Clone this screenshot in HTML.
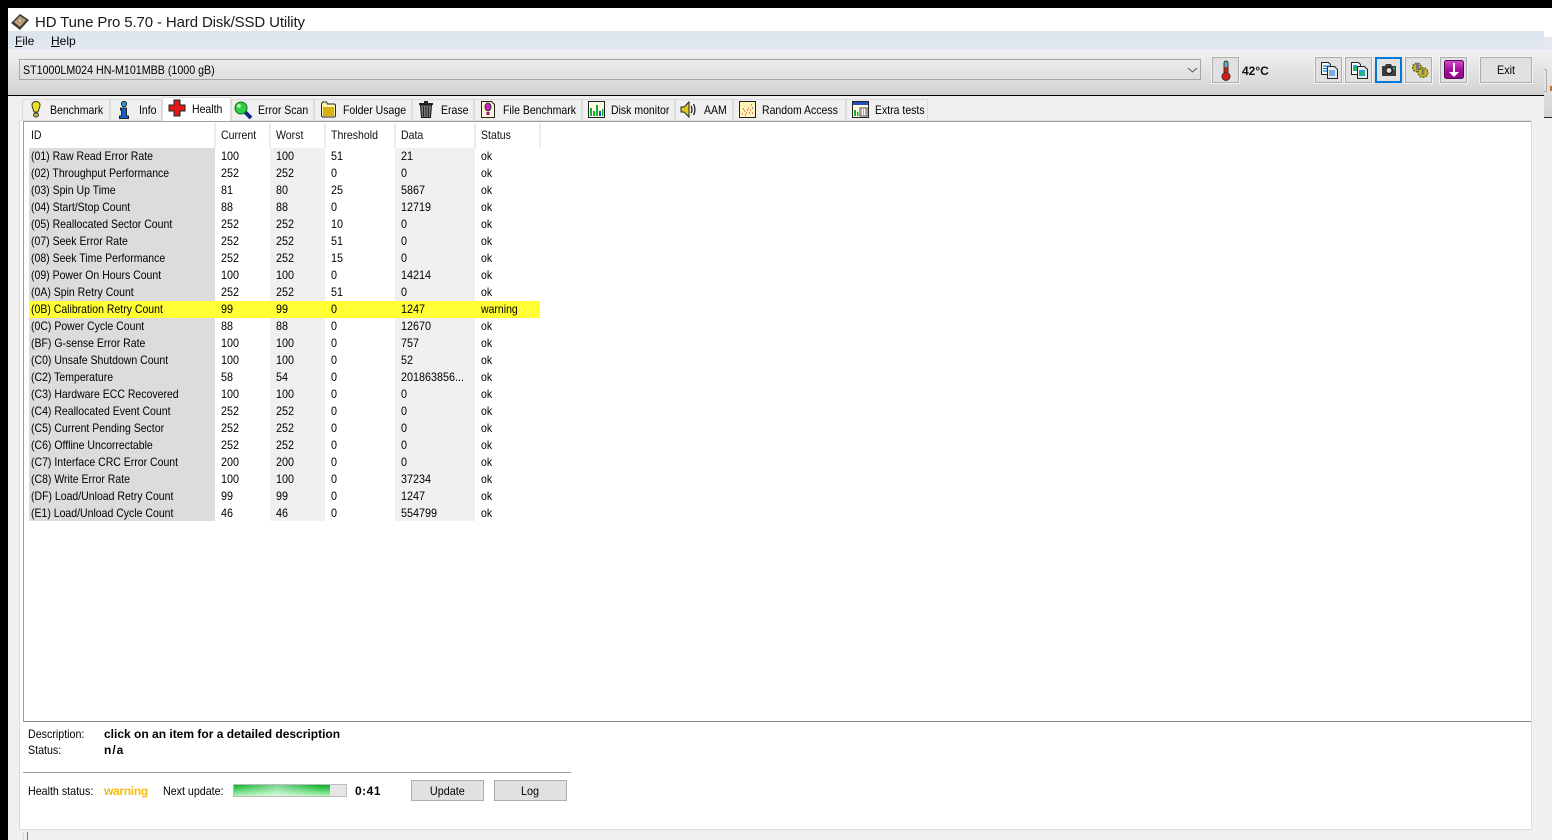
<!DOCTYPE html>
<html><head><meta charset="utf-8"><title>HD Tune Pro</title>
<style>
html,body{margin:0;padding:0;background:#fff}
body{width:1552px;height:840px;overflow:hidden;position:relative;font:12px/14px "Liberation Sans",sans-serif;color:#000}
.a,.r span,.t span,.h span{position:absolute;white-space:nowrap}
.a{display:block}
.s{transform:scaleX(.89);transform-origin:0 0}
.r{position:absolute;left:29px;width:511px;height:17px}
.r span{top:1px;transform:scaleX(.9);transform-origin:0 0}
.r .c1{transform:scaleX(.875)}
.r .c6{transform:scaleX(.875)}
.c1{left:2px}.c2{left:192px}.c3{left:247px}.c4{left:302px}.c5{left:372px}.c6{left:452px}
.y{background:#ffff33}
.t{position:absolute;top:99px;height:21px;box-sizing:border-box;background:#f0f0f0;border:1px solid #dcdcdc;border-bottom:0}
.t span{top:3px;transform:scaleX(.875);transform-origin:0 0}
.t svg,.btn svg{position:absolute}
.btn{position:absolute;box-sizing:border-box;background:#e1e1e1;border:1px solid #adadad;box-shadow:0 0 0 1px #f4f4f4;text-align:center}
.btn b{font-weight:normal;display:inline-block;transform:scaleX(.9)}
.h span{top:128px;color:#111;transform:scaleX(.88);transform-origin:0 0}
.sep{position:absolute;top:123px;width:2px;height:25px;background:#ececec}
</style></head><body>
<!-- window frame -->
<div class="a" style="left:0;top:0;width:1552px;height:8px;background:#000"></div>
<div class="a" style="left:0;top:0;width:8px;height:840px;background:#000"></div>
<div class="a" style="left:8px;top:8px;width:1536px;height:23px;background:#fff"></div>
<div class="a" style="left:8px;top:31px;width:1536px;height:19px;background:linear-gradient(#dbe3ed,#e4e9f1)"></div>
<div class="a" style="left:8px;top:50px;width:1536px;height:45px;background:linear-gradient(#f1f1f1,#d2d2d2)"></div>
<div class="a" style="left:8px;top:95px;width:1536px;height:1px;background:#000"></div>
<div class="a" style="left:8px;top:96px;width:1536px;height:744px;background:#f0f0f0"></div>
<!-- neighbouring window strip -->
<div class="a" style="left:1544px;top:37px;width:8px;height:13px;background:#e4e9f1"></div>
<div class="a" style="left:1544px;top:50px;width:8px;height:67px;background:linear-gradient(#f0f0f0,#d4d4d4)"></div>
<div class="a" style="left:1544px;top:69px;width:3px;height:23px;border:1px solid #b0b0b0;border-left:0;box-sizing:border-box"></div>
<div class="a" style="left:1550px;top:86px;width:2px;height:5px;background:#c07820"></div>
<div class="a" style="left:1544px;top:117px;width:8px;height:1px;background:#222"></div>
<div class="a" style="left:1544px;top:118px;width:8px;height:722px;background:#f0f0f0"></div>

<!-- title -->
<svg class="a" style="left:11px;top:13px" width="19" height="18" viewBox="0 0 19 18"><path d="M0 10 9 1l9 6-9 10z" fill="#3a3a3a"/><path d="M3 9 9 3l6 4-6 7z" fill="#c8a070"/><ellipse cx="9" cy="7.500" rx="3" ry="2.500" fill="#9a9a8a"/><circle cx="9" cy="7.500" r="1" fill="#f0e6d0"/></svg>
<div class="a" style="left:35px;top:14px;font-size:15px;line-height:17px;color:#1a1a1a;letter-spacing:-.13px;white-space:nowrap">HD Tune Pro 5.70 - Hard Disk/SSD Utility</div>
<div class="a" style="left:15px;top:34px"><u>F</u>ile</div>
<div class="a" style="left:51px;top:34px"><u>H</u>elp</div>

<!-- toolbar -->
<div class="a" style="left:19px;top:59px;width:1182px;height:21px;box-sizing:border-box;border:1px solid #a6a6a6;background:linear-gradient(#ebebeb,#dedede)"></div>
<div class="a s" style="left:23px;top:63px;white-space:nowrap">ST1000LM024 HN-M101MBB (1000 gB)</div>
<svg class="a" style="left:1187px;top:67px" width="11" height="6"><path d="M1 1l4.500 4L10 1" fill="none" stroke="#555"/></svg>

<div class="btn" style="left:1212px;top:57px;width:27px;height:26px"><svg style="left:6px;top:2px" width="14" height="22" viewBox="0 0 14 22"><rect x="5" y="1" width="4" height="13" rx="2" fill="#5fb8c8" stroke="#333"/><rect x="5.500" y="7" width="3" height="8" fill="#e01818"/><circle cx="7" cy="16.500" r="4" fill="#e01818" stroke="#333"/></svg></div>
<div class="a" style="left:1242px;top:64px;font-weight:bold;font-size:12px;color:#111">42°C</div>

<div class="btn" style="left:1315px;top:57px;width:27px;height:26px"><svg style="left:5px;top:4px" width="17" height="17" viewBox="0 0 17 17"><path d="M.5.500h7l2 2v10H.5z" fill="#fff" stroke="#222"/><path d="M6.500 4.500h7l3 3v9h-10z" fill="#e8e8e8" stroke="#222"/><path d="M2 4h6M2 6.500h4M2 9h4" stroke="#0a78e0" stroke-width="1.300"/><path d="M8 9h6M8 11h6M8 13h6" stroke="#0a78e0"/></svg></div>
<div class="btn" style="left:1345px;top:57px;width:27px;height:26px"><svg style="left:5px;top:4px" width="17" height="17" viewBox="0 0 17 17"><path d="M.5.500h7l2 2v10H.5z" fill="#fff" stroke="#222"/><path d="M6.500 4.500h7l3 3v9h-10z" fill="#e8e8e8" stroke="#222"/><rect x="2" y="3" width="4" height="6" fill="#1fa0e0"/><rect x="3" y="5" width="3" height="3" fill="#22c040"/><rect x="8" y="8" width="6" height="6" fill="#1fa0e0"/><rect x="9.500" y="10" width="3" height="3" fill="#22c040"/></svg></div>
<div class="btn" style="left:1375px;top:57px;width:27px;height:26px;border:2px solid #0078d7;box-shadow:none"><svg style="left:4px;top:4px" width="16" height="14" viewBox="0 0 16 14"><path d="M1 3h3l1-2h5l1 2h4v10H1z" fill="#3c3c3c"/><circle cx="8" cy="7.500" r="3" fill="#e0e0e0" stroke="#111"/><rect x="12" y="4.500" width="2" height="2" fill="#22d040"/></svg></div>
<div class="btn" style="left:1405px;top:57px;width:27px;height:26px"><svg style="left:5px;top:4px" width="18" height="16" viewBox="0 0 18 16"><circle cx="6" cy="5.500" r="4.300" fill="#c8b820" stroke="#6a6010" stroke-width="1.500" stroke-dasharray="2 1"/><circle cx="12" cy="10.500" r="4.800" fill="#d0c020" stroke="#6a6010" stroke-width="1.500" stroke-dasharray="2 1"/><rect x="5" y="1" width="3" height="7" fill="#777"/><rect x="10.500" y="7" width="3" height="6" fill="#777"/></svg></div>
<div class="btn" style="left:1440px;top:57px;width:27px;height:26px"><svg style="left:3px;top:2px" width="20" height="20" viewBox="0 0 20 20"><defs><linearGradient id="g" x1="0" y1="0" x2="0" y2="1"><stop offset="0" stop-color="#d050c8"/><stop offset=".5" stop-color="#a8109c"/><stop offset="1" stop-color="#8a0a80"/></linearGradient></defs><rect x=".5" y=".5" width="19" height="18" rx="2" fill="url(#g)" stroke="#5a0a55"/><path d="M9 3h2v9h4l-5 5-5-5h4z" fill="#fff"/></svg></div>
<div class="btn" style="left:1480px;top:57px;width:52px;height:26px;line-height:24px"><b>Exit</b></div>

<!-- main white panel -->
<div class="a" style="left:19px;top:120px;width:1513px;height:710px;box-sizing:border-box;background:#fff;border:1px solid #dcdcdc;border-left:1px solid #dcdcdc"></div>
<div class="a" style="left:23px;top:121px;width:1508px;height:601px;box-sizing:border-box;background:#fff;border:1px solid #a0a0a0;border-width:1px 0 1px 1px;border-bottom-color:#858590"></div>

<!-- tabs -->
<div class="t" style="left:22px;width:88px"><svg style="left:7px;top:1px" width="12" height="17" viewBox="0 0 12 17"><path d="M6 .5c2.500 0 4 1.500 4 3.500 0 2-1.500 5-2 7H4C3.500 9 2 6 2 4 2 2 3.500.5 6 .5z" fill="#e8e020" stroke="#333"/><ellipse cx="6" cy="14" rx="2.500" ry="2" fill="#c8c020" stroke="#333"/></svg><span style="left:27px">Benchmark</span></div>
<div class="t" style="left:110px;width:52px"><svg style="left:7px;top:1px" width="12" height="18" viewBox="0 0 12 18"><circle cx="6" cy="3" r="2.600" fill="#20a0f0" stroke="#222"/><path d="M2.500 7h6v8h2v2.500h-9V15h2v-6h-1z" fill="#1060d0" stroke="#222"/></svg><span style="left:28px">Info</span></div>
<div class="t" style="left:231px;width:83px"><svg style="left:2px;top:1px" width="19" height="19" viewBox="0 0 19 19"><path d="M10 10l7 7" stroke="#102a90" stroke-width="4"/><circle cx="7" cy="7" r="6" fill="#30d040" stroke="#107020"/><circle cx="5" cy="5" r="1.800" fill="#c8ffc8"/></svg><span style="left:26px">Error Scan</span></div>
<div class="t" style="left:314px;width:98px"><svg style="left:5px;top:1px" width="17" height="17" viewBox="0 0 17 17"><path d="M1.500 3l1-2h4l1 2h7l1 1v11l-1 1h-12l-1-1z" fill="#fff4b0" stroke="#222"/><path d="M3 6h11v9H3z" fill="#d8b010"/></svg><span style="left:28px">Folder Usage</span></div>
<div class="t" style="left:412px;width:62px"><svg style="left:5px;top:1px" width="16" height="17" viewBox="0 0 16 17"><path d="M1 3h14M6 1h4" stroke="#222" stroke-width="2"/><path d="M2.500 4h11l-1 12.500h-9z" fill="#777" stroke="#111"/><path d="M5.500 5.500v10M8 5.500v10M10.500 5.500v10" stroke="#222"/></svg><span style="left:28px">Erase</span></div>
<div class="t" style="left:474px;width:108px"><svg style="left:5px;top:0" width="16" height="19" viewBox="0 0 16 19"><path d="M1.500 1.500h10l3 3v13h-13z" fill="#fff5d8" stroke="#222"/><ellipse cx="8" cy="7" rx="3" ry="4" fill="#d020c0" stroke="#333"/><rect x="6.500" y="12" width="3" height="3" fill="#901080"/></svg><span style="left:28px">File Benchmark</span></div>
<div class="t" style="left:582px;width:93px"><svg style="left:5px;top:1px" width="17" height="17" viewBox="0 0 17 17"><rect x=".5" y=".5" width="16" height="16" fill="#fffbe0" stroke="#222"/><path d="M2 15V7h2v8zM5 15V10h2v5zM8 15V4h2v11z" fill="#10b030"/><path d="M11 15v-5h2v5z" fill="#1050d0"/><path d="M14 15V8h1.500v7z" fill="#10b030"/></svg><span style="left:28px">Disk monitor</span></div>
<div class="t" style="left:675px;width:58px"><svg style="left:4px;top:1px" width="18" height="17" viewBox="0 0 18 17"><path d="M1 6h3l5-5v15l-5-5H1z" fill="#e0c820" stroke="#222"/><path d="M11 5q2 3.500 0 7M13.500 3q3 5.500 0 11" fill="none" stroke="#222" stroke-width="1.300"/></svg><span style="left:28px">AAM</span></div>
<div class="t" style="left:733px;width:113px"><svg style="left:5px;top:1px" width="17" height="17" viewBox="0 0 17 17"><rect x=".5" y=".5" width="16" height="16" fill="#fff4b8" stroke="#222"/><path d="M3 13h1M5 10h1M7 12h1M9 7h1M11 9h1M12 4h1M13 12h1" stroke="#e02020"/><path d="M4 8h1M6 14h1M8 9h1M10 12h1M13 7h1" stroke="#2040d0"/></svg><span style="left:28px">Random Access</span></div>
<div class="t" style="left:846px;width:82px"><svg style="left:5px;top:1px" width="17" height="17" viewBox="0 0 17 17"><rect x=".5" y=".5" width="16" height="16" fill="#fffbe0" stroke="#222"/><rect x="1" y="1" width="15" height="3" fill="#2050c0"/><path d="M2 15v-6h2v6zM5 15v-4h1.500v4z" fill="#10b030"/><rect x="8" y="7" width="7" height="8" fill="#fff" stroke="#444"/><path d="M9 9h5M9 11h5M9 13h5" stroke="#e02020" stroke-dasharray="1 1"/></svg><span style="left:28px">Extra tests</span></div>
<div class="t" style="left:162px;top:97px;width:69px;height:24px;background:#fff;border-color:#dcdcdc;border-bottom:0"><svg style="left:5px;top:1px" width="18" height="18" viewBox="0 0 18 18"><path d="M6 1h6v5h5v6h-5v5H6v-5H1V6h5z" fill="#e01818" stroke="#222"/></svg><span style="left:29px;top:4px">Health</span></div>

<!-- list header -->
<div class="h">
<span style="left:31px">ID</span><span style="left:221px">Current</span><span style="left:276px">Worst</span><span style="left:331px">Threshold</span><span style="left:401px">Data</span><span style="left:481px">Status</span>
</div>
<div class="sep" style="left:214px"></div><div class="sep" style="left:269px"></div><div class="sep" style="left:324px"></div><div class="sep" style="left:394px"></div><div class="sep" style="left:474px"></div><div class="sep" style="left:539px"></div>

<!-- column bands -->
<div class="a" style="left:29px;top:148px;width:186px;height:373px;background:#dcdcdc"></div>
<div class="a" style="left:270px;top:148px;width:55px;height:373px;background:#f0f0f0"></div>
<div class="a" style="left:395px;top:148px;width:80px;height:373px;background:#f0f0f0"></div>

<div class="r" style="top:148px"><span class="c1">(01) Raw Read Error Rate</span><span class="c2">100</span><span class="c3">100</span><span class="c4">51</span><span class="c5">21</span><span class="c6">ok</span></div>
<div class="r" style="top:165px"><span class="c1">(02) Throughput Performance</span><span class="c2">252</span><span class="c3">252</span><span class="c4">0</span><span class="c5">0</span><span class="c6">ok</span></div>
<div class="r" style="top:182px"><span class="c1">(03) Spin Up Time</span><span class="c2">81</span><span class="c3">80</span><span class="c4">25</span><span class="c5">5867</span><span class="c6">ok</span></div>
<div class="r" style="top:199px"><span class="c1">(04) Start/Stop Count</span><span class="c2">88</span><span class="c3">88</span><span class="c4">0</span><span class="c5">12719</span><span class="c6">ok</span></div>
<div class="r" style="top:216px"><span class="c1">(05) Reallocated Sector Count</span><span class="c2">252</span><span class="c3">252</span><span class="c4">10</span><span class="c5">0</span><span class="c6">ok</span></div>
<div class="r" style="top:233px"><span class="c1">(07) Seek Error Rate</span><span class="c2">252</span><span class="c3">252</span><span class="c4">51</span><span class="c5">0</span><span class="c6">ok</span></div>
<div class="r" style="top:250px"><span class="c1">(08) Seek Time Performance</span><span class="c2">252</span><span class="c3">252</span><span class="c4">15</span><span class="c5">0</span><span class="c6">ok</span></div>
<div class="r" style="top:267px"><span class="c1">(09) Power On Hours Count</span><span class="c2">100</span><span class="c3">100</span><span class="c4">0</span><span class="c5">14214</span><span class="c6">ok</span></div>
<div class="r" style="top:284px"><span class="c1">(0A) Spin Retry Count</span><span class="c2">252</span><span class="c3">252</span><span class="c4">51</span><span class="c5">0</span><span class="c6">ok</span></div>
<div class="r y" style="top:301px"><span class="c1">(0B) Calibration Retry Count</span><span class="c2">99</span><span class="c3">99</span><span class="c4">0</span><span class="c5">1247</span><span class="c6">warning</span></div>
<div class="r" style="top:318px"><span class="c1">(0C) Power Cycle Count</span><span class="c2">88</span><span class="c3">88</span><span class="c4">0</span><span class="c5">12670</span><span class="c6">ok</span></div>
<div class="r" style="top:335px"><span class="c1">(BF) G-sense Error Rate</span><span class="c2">100</span><span class="c3">100</span><span class="c4">0</span><span class="c5">757</span><span class="c6">ok</span></div>
<div class="r" style="top:352px"><span class="c1">(C0) Unsafe Shutdown Count</span><span class="c2">100</span><span class="c3">100</span><span class="c4">0</span><span class="c5">52</span><span class="c6">ok</span></div>
<div class="r" style="top:369px"><span class="c1">(C2) Temperature</span><span class="c2">58</span><span class="c3">54</span><span class="c4">0</span><span class="c5">201863856...</span><span class="c6">ok</span></div>
<div class="r" style="top:386px"><span class="c1">(C3) Hardware ECC Recovered</span><span class="c2">100</span><span class="c3">100</span><span class="c4">0</span><span class="c5">0</span><span class="c6">ok</span></div>
<div class="r" style="top:403px"><span class="c1">(C4) Reallocated Event Count</span><span class="c2">252</span><span class="c3">252</span><span class="c4">0</span><span class="c5">0</span><span class="c6">ok</span></div>
<div class="r" style="top:420px"><span class="c1">(C5) Current Pending Sector</span><span class="c2">252</span><span class="c3">252</span><span class="c4">0</span><span class="c5">0</span><span class="c6">ok</span></div>
<div class="r" style="top:437px"><span class="c1">(C6) Offline Uncorrectable</span><span class="c2">252</span><span class="c3">252</span><span class="c4">0</span><span class="c5">0</span><span class="c6">ok</span></div>
<div class="r" style="top:454px"><span class="c1">(C7) Interface CRC Error Count</span><span class="c2">200</span><span class="c3">200</span><span class="c4">0</span><span class="c5">0</span><span class="c6">ok</span></div>
<div class="r" style="top:471px"><span class="c1">(C8) Write Error Rate</span><span class="c2">100</span><span class="c3">100</span><span class="c4">0</span><span class="c5">37234</span><span class="c6">ok</span></div>
<div class="r" style="top:488px"><span class="c1">(DF) Load/Unload Retry Count</span><span class="c2">99</span><span class="c3">99</span><span class="c4">0</span><span class="c5">1247</span><span class="c6">ok</span></div>
<div class="r" style="top:505px"><span class="c1">(E1) Load/Unload Cycle Count</span><span class="c2">46</span><span class="c3">46</span><span class="c4">0</span><span class="c5">554799</span><span class="c6">ok</span></div>

<!-- bottom -->
<div class="a s" style="left:28px;top:727px">Description:</div>
<div class="a" style="left:104px;top:727px;font-weight:bold;white-space:nowrap">click on an item for a detailed description</div>
<div class="a s" style="left:28px;top:743px">Status:</div>
<div class="a" style="left:104px;top:743px;font-weight:bold;letter-spacing:1px">n/a</div>
<div class="a" style="left:23px;top:772px;width:548px;height:1px;background:#a0a0a0"></div>
<div class="a s" style="left:28px;top:784px;white-space:nowrap">Health status:</div>
<div class="a" style="left:104px;top:784px;font-weight:bold;color:#f7bb0a;letter-spacing:-.3px">warning</div>
<div class="a s" style="left:163px;top:784px;white-space:nowrap">Next update:</div>
<div class="a" style="left:233px;top:784px;width:114px;height:13px;box-sizing:border-box;background:#e6e6e6;border:1px solid #bcbcbc"></div>
<div class="a" style="left:234px;top:785px;width:96px;height:11px;background:linear-gradient(90deg,rgba(255,255,255,0),rgba(255,255,255,.5) 45%,rgba(255,255,255,0) 90%),linear-gradient(#06b025,#8ce89a 80%,#b8f0c0)"></div>
<div class="a" style="left:355px;top:784px;font-weight:bold;letter-spacing:.5px">0:41</div>
<div class="btn" style="left:411px;top:780px;width:73px;height:21px;line-height:20px;box-shadow:none"><b>Update</b></div>
<div class="btn" style="left:494px;top:780px;width:73px;height:21px;line-height:20px;box-shadow:none"><b>Log</b></div>
<div class="a" style="left:23px;top:832px;width:1px;height:8px;background:#d8d8d8"></div>
<div class="a" style="left:27px;top:832px;width:1px;height:8px;background:#777"></div>
</body></html>
